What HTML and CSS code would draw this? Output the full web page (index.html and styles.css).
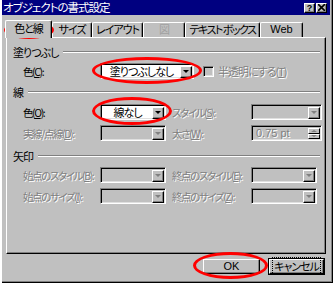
FILE: index.html
```html
<!DOCTYPE html>
<html lang="ja">
<head>
  <meta charset="UTF-8">
  <title>オブジェクトの書式設定</title>
  <link rel="stylesheet" href="styles.css">
</head>
<body>

  <div class="window">
    <div class="titlebar">
      <span class="title">オブジェクトの書式設定</span>
      <div class="tb-buttons">
        <span class="tb-btn">?</span>
        <span class="tb-btn close">
          <svg width="7" height="7" viewBox="0 0 7 7"><path d="M0 0L7 7M7 0L0 7" stroke="#000" stroke-width="1.6"/></svg>
        </span>
      </div>
    </div>

    <div class="tabs">
      <div class="tab active">色と線</div>
      <div class="tab t-size">サイズ</div>
      <div class="tab t-layout">レイアウト</div>
      <div class="tab t-pic disabled">図</div>
      <div class="tab t-text">テキスト ボックス</div>
      <div class="tab t-web">Web</div>
    </div>

    <div class="panel">
      <div class="group-head"><span>塗りつぶし</span></div>
      <div class="row r-fill">
        <span class="lbl">色(<u>C</u>):</span>
        <div class="combo wide"><span class="val">塗りつぶしなし</span><span class="arrow"></span></div>
        <span class="check"></span>
        <span class="dis check-lbl">半透明にする(<u>T</u>)</span>
      </div>

      <div class="group-head g-line"><span>線</span></div>
      <div class="row r-line1">
        <span class="lbl">色(<u>O</u>):</span>
        <div class="combo"><span class="val">線なし</span><span class="arrow"></span></div>
        <span class="lbl2 dis">スタイル(<u>S</u>):</span>
        <div class="combo off long"><span class="val"></span><span class="arrow"></span></div>
      </div>
      <div class="row r-line2">
        <span class="lbl dis">実線/点線(<u>D</u>):</span>
        <div class="combo off"><span class="val"></span><span class="arrow"></span></div>
        <span class="lbl2 dis">太さ(<u>W</u>):</span>
        <div class="spin long"><span class="val dis">0.75 pt</span>
          <span class="spin-btns"><span class="sb up"></span><span class="sb down"></span></span>
        </div>
      </div>

      <div class="group-head g-arrow"><span>矢印</span></div>
      <div class="row r-arrow1">
        <span class="lbl dis">始点のスタイル(<u>B</u>):</span>
        <div class="combo off"><span class="val"></span><span class="arrow"></span></div>
        <span class="lbl2 dis">終点のスタイル(<u>E</u>):</span>
        <div class="combo off mid"><span class="val"></span><span class="arrow"></span></div>
      </div>
      <div class="row r-arrow2">
        <span class="lbl dis">始点のサイズ(<u>I</u>):</span>
        <div class="combo off"><span class="val"></span><span class="arrow"></span></div>
        <span class="lbl2 dis">終点のサイズ(<u>Z</u>):</span>
        <div class="combo off mid"><span class="val"></span><span class="arrow"></span></div>
      </div>
    </div>

    <div class="footer">
      <button class="btn ok">OK</button>
      <button class="btn default"><span class="focus">キャンセル</span></button>
    </div>

    <!-- red marks drawn over the dialog -->
    <span class="mark m-tab"></span>
    <span class="mark m-fill"></span>
    <span class="mark m-line"></span>
    <span class="mark m-ok"></span>
  </div>

</body>
</html>
```

FILE: styles.css
```css
body {
  margin: 0;
  font-family: "Noto Sans CJK JP", sans-serif;
  font-size: 11px;
  font-feature-settings: "palt" 1;
  letter-spacing: -1px;
  color: #000;
}
.window {
  position: relative;
  width: 333px;
  height: 283px;
  box-sizing: border-box;
  padding: 0 3px 2px 2px;
  background: #c0c0c0;
  box-shadow: inset 2px 0 #fff, inset 1px 0 #dfdfdf, inset -1px -1px #000, inset -2px -2px #808080;
  overflow: hidden;
}
.titlebar {
  height: 15px;
  background: #000080;
  color: #fff;
  display: flex;
  align-items: center;
  justify-content: space-between;
  padding: 0 3px 0 1px;
  line-height: 15px;
}
.title {
  font-size: 11.5px;
}
.tb-buttons {
  display: flex;
  gap: 1px;
}
.tb-btn {
  width: 11px;
  height: 10px;
  box-sizing: border-box;
  background: #c0c0c0;
  border: 1px solid;
  border-color: #fff #000 #000 #fff;
  box-shadow: inset -1px -1px #808080;
  color: #000;
  font-family: "Liberation Sans", sans-serif;
  font-weight: bold;
  font-size: 9px;
  letter-spacing: 0;
  line-height: 8px;
  display: flex;
  align-items: center;
  justify-content: center;
}
.tb-btn svg {
  display: block;
}

.tabs {
  display: flex;
  align-items: flex-end;
  height: 17px;
  margin-top: 5px;
  padding-left: 3px;
}
.tab {
  height: 15px;
  box-sizing: border-box;
  border-top: 1px solid #fff;
  border-left: 1px solid #fff;
  border-right: 1px solid #000;
  box-shadow: inset -1px 0 #808080;
  border-radius: 2px 2px 0 0;
  text-align: center;
  line-height: 13px;
  white-space: nowrap;
}
.tab.active {
  width: 47px;
  height: 18px;
  margin-bottom: -1px;
  position: relative;
  z-index: 1;
  background: #c0c0c0;
  line-height: 15px;
}
.t-size { width: 40px; }
.t-layout { width: 51px; }
.t-pic { width: 42px; color: #a0a0a0; }
.t-text { width: 75px; letter-spacing: -1.5px; }
.t-web {
  width: 43px;
  font-family: "Liberation Sans", sans-serif;
  letter-spacing: 0;
}

.panel {
  margin-left: 4px;
  width: 320px;
  height: 217px;
  box-sizing: border-box;
  border: 1px solid;
  border-color: #fff #000 #000 #fff;
  box-shadow: inset -1px -1px #808080;
  padding: 7px 5px 0 6px;
}
.group-head {
  display: flex;
  align-items: center;
  gap: 5px;
  height: 14px;
  line-height: 14px;
}
.group-head::after {
  content: "";
  flex: 1;
  height: 0;
  border-top: 1px solid #808080;
  border-bottom: 1px solid #fff;
}
.g-line { margin-top: 6px; }
.g-arrow { margin-top: 8px; }

.row {
  display: flex;
  align-items: center;
  height: 16px;
  padding-left: 10px;
  margin-top: 5px;
  white-space: nowrap;
}
.r-fill, .r-arrow1 { margin-top: 4px; }
.lbl {
  width: 77px;
  flex-shrink: 0;
  font-size: 10.5px;
  letter-spacing: -1.4px;
}
.lbl2 {
  width: 79px;
  flex-shrink: 0;
  margin-left: 6px;
  font-size: 10.5px;
  letter-spacing: -1.4px;
}
.dis {
  color: #808080;
  text-shadow: 1px 1px 0 #fff;
}

.combo, .spin {
  width: 66px;
  height: 16px;
  flex-shrink: 0;
  box-sizing: border-box;
  border: 1px solid;
  border-color: #808080 #fff #fff #808080;
  box-shadow: inset 1px 1px #000, inset -1px -1px #dfdfdf;
  background: #fff;
  padding: 2px 1px 1px 2px;
  display: flex;
}
.combo.wide { width: 94px; }
.combo.long, .spin.long { width: 71px; }
.combo.mid { width: 66px; }
.combo.off, .spin { background: #c0c0c0; }
.val {
  flex: 1;
  text-align: center;
  line-height: 11px;
}
.spin .val {
  text-align: left;
  padding-left: 2px;
  font-family: "Liberation Sans", sans-serif;
  letter-spacing: 0;
}
.arrow {
  width: 12px;
  height: 12px;
  box-sizing: border-box;
  border: 1px solid;
  border-color: #fff #000 #000 #fff;
  box-shadow: inset -1px -1px #808080;
  background: #c0c0c0;
  display: flex;
  align-items: center;
  justify-content: center;
}
.arrow::after {
  content: "";
  border-left: 3px solid transparent;
  border-right: 3px solid transparent;
  border-top: 3px solid #000;
  margin-bottom: 1px;
}
.off .arrow::after {
  border-top-color: #808080;
}

.spin-btns {
  width: 12px;
  display: flex;
  flex-direction: column;
}
.sb {
  height: 6px;
  box-sizing: border-box;
  border: 1px solid;
  border-color: #fff #000 #000 #fff;
  background: #c0c0c0;
  display: flex;
  align-items: center;
  justify-content: center;
}
.sb.up::after {
  content: "";
  border-left: 3px solid transparent;
  border-right: 3px solid transparent;
  border-bottom: 2px solid #808080;
}
.sb.down::after {
  content: "";
  border-left: 3px solid transparent;
  border-right: 3px solid transparent;
  border-top: 2px solid #808080;
}

.check {
  width: 11px;
  height: 11px;
  box-sizing: border-box;
  margin-left: 9px;
  border: 1px solid;
  border-color: #808080 #fff #fff #808080;
  box-shadow: inset 1px 1px #000, inset -1px -1px #dfdfdf;
  background: #c0c0c0;
}
.check-lbl {
  margin-left: 4px;
}

.footer {
  display: flex;
  justify-content: flex-end;
  gap: 9px;
  margin-top: 5px;
  padding-right: 6px;
}
.btn {
  font: inherit;
  letter-spacing: inherit;
  width: 57px;
  height: 15px;
  padding: 0;
  box-sizing: border-box;
  background: #c0c0c0;
  border: 1px solid;
  border-color: #fff #000 #000 #fff;
  box-shadow: inset -1px -1px #808080;
  line-height: 11px;
  color: #000;
}
.btn.ok {
  font-family: "Liberation Sans", sans-serif;
  letter-spacing: 0;
}
.btn.default {
  width: 55px;
  outline: 1px solid #000;
}
.focus {
  border: 1px dotted #000;
  padding: 0 1px;
}

.mark {
  position: absolute;
  border: 3px solid #f00;
  border-radius: 50%;
  box-sizing: border-box;
}
.m-tab { left: 4px; top: 21px; width: 50px; height: 18px; }
.m-fill { left: 92px; top: 57px; width: 110px; height: 27px; }
.m-line { left: 92px; top: 97px; width: 80px; height: 28px; }
.m-ok { left: 193px; top: 252px; width: 75px; height: 27px; }
```
